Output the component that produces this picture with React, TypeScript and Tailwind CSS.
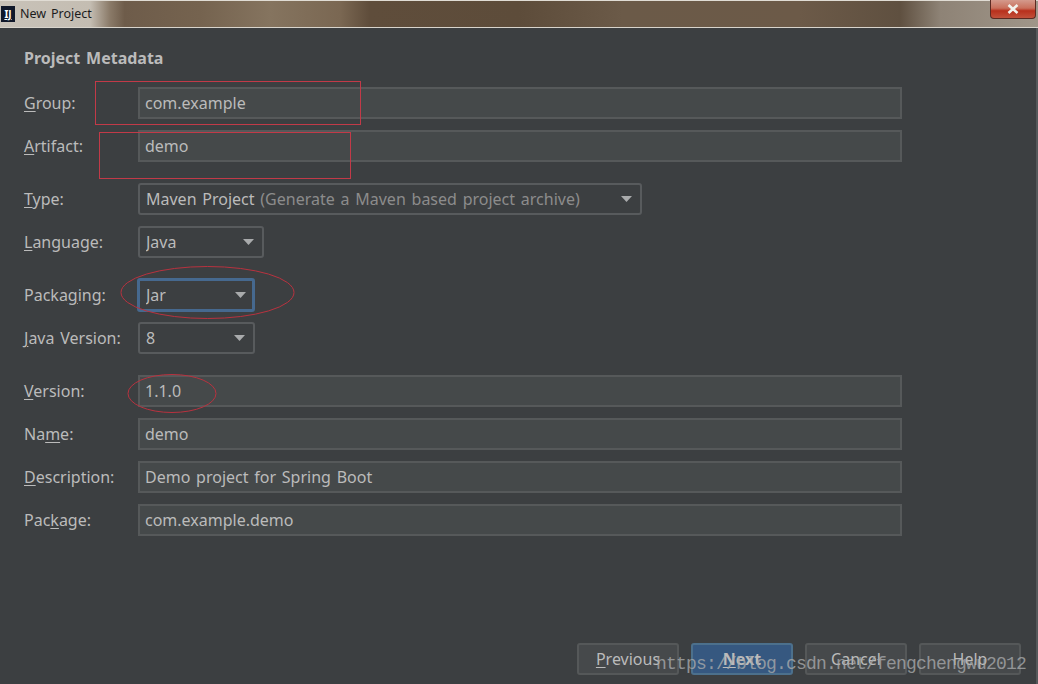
import React from "react";

const underline = "underline underline-offset-2 decoration-1";

function Label({ pre = "", u, post }: { pre?: string; u: string; post: string }) {
  return (
    <label className="w-[114px] shrink-0 text-[16px] text-[#bbbbbb]">
      {pre}
      <span className={underline}>{u}</span>
      {post}
    </label>
  );
}

function Field({ value }: { value: string }) {
  return (
    <div className="flex h-[32px] w-[764px] items-center border-2 border-[#56595a] bg-[#45494a] pl-[5px] text-[16px] text-[#bbbbbb]">
      {value}
    </div>
  );
}

function Select({ width, focused, children }: { width: string; focused?: boolean; children: React.ReactNode }) {
  return (
    <div
      className={
        focused
          ? `flex h-[34px] -ml-px items-center justify-between rounded-[3px] border-[3px] border-[#46698f] bg-[#3c3f41] pl-[6px] pr-[6px] text-[16px] text-[#bbbbbb] ${width}`
          : `flex h-[32px] items-center justify-between rounded-[3px] border-2 border-[#585b5d] bg-[#3c3f41] pl-[6px] pr-[8px] text-[16px] text-[#bbbbbb] ${width}`
      }
    >
      <span className="truncate">{children}</span>
      <svg width="11" height="6" viewBox="0 0 11 6" className="shrink-0">
        <path d="M0 0h11L5.5 6z" fill="#a9abac" />
      </svg>
    </div>
  );
}

function Button({ primary, children }: { primary?: boolean; children: React.ReactNode }) {
  return (
    <button
      className={
        primary
          ? "h-[32px] w-[102px] rounded-[3px] border-2 border-[#4c708c] bg-[#365880] text-[16px] font-bold text-[#bbbbbb]"
          : "h-[32px] w-[102px] rounded-[3px] border-2 border-[#555859] bg-[#46494b] text-[16px] text-[#bbbbbb]"
      }
    >
      {children}
    </button>
  );
}

export default function App() {
  return (
    <div
      className="relative flex h-[684px] w-[1038px] flex-col overflow-hidden bg-[#3c3f41] [word-spacing:1.6px]"
      style={{ fontFamily: '"Noto Sans", "Open Sans", sans-serif' }}
    >
      {/* Title bar */}
      <div className="relative flex h-[28px] shrink-0 items-center border-t border-b border-t-[#e0dcd4] border-b-[#d8d4cc] bg-[linear-gradient(90deg,#c8c2b8_0%,#c4bdb2_8.7%,#8a7a68_10.6%,#6e5c4a_12%,#75634f_19.3%,#85745f_26%,#7a6752_32.8%,#5f4d3b_35.6%,#5d4c3a_50%,#6b5a48_60%,#6c5a48_77%,#5f5040_86.7%,#8e8376_90.6%,#a09689_100%)]">
        <div className="ml-px flex h-[16px] w-[14px] items-center justify-center bg-[#10182a] text-[10px] font-bold leading-none text-white underline">
          IJ
        </div>
        <span className="ml-[5px] text-[12.5px] text-[#1c1c1c]">New Project</span>
        <div className="absolute right-[2px] top-[-1px] flex h-[19px] w-[46px] items-center justify-center rounded-b-[4px] border border-t-0 border-[#5c2a22] bg-[linear-gradient(180deg,#d49a8c_0%,#c9705c_45%,#b8301c_60%,#c2503a_100%)]">
          <svg width="12" height="10" viewBox="0 0 12 10">
            <path d="M1.5 1l9 8M10.5 1l-9 8" stroke="#f2f2ec" strokeWidth="2.6" />
          </svg>
        </div>
      </div>

      {/* Form */}
      <div className="flex flex-1 flex-col border-r-2 border-[#55585a] pl-[24px]">
        <h2 className="mt-[18px] h-[24px] text-[16px] font-bold leading-[24px] text-[#bbbbbb]">Project Metadata</h2>

        <div className="mt-[17px] flex flex-col gap-[11px]">
          <div className="flex items-center"><Label u="G" post="roup:" /><Field value="com.example" /></div>
          <div className="flex items-center"><Label u="A" post="rtifact:" /><Field value="demo" /></div>
        </div>

        <div className="mt-[21px] flex flex-col gap-[11px]">
          <div className="flex items-center">
            <Label u="T" post="ype:" />
            <Select width="w-[504px]">
              Maven Project <span className="text-[#8c8c8c]">(Generate a Maven based project archive)</span>
            </Select>
          </div>
          <div className="flex items-center"><Label u="L" post="anguage:" /><Select width="w-[126px]">Java</Select></div>
        </div>

        <div className="mt-[20px] flex h-[34px] items-center">
          <Label pre="Packa" u="g" post="ing:" />
          <Select width="w-[118px]" focused>Jar</Select>
        </div>

        <div className="mt-[10px] flex items-center">
          <Label u="J" post="ava Version:" />
          <Select width="w-[117px]">8</Select>
        </div>

        <div className="mt-[21px] flex flex-col gap-[11px]">
          <div className="flex items-center"><Label u="V" post="ersion:" /><Field value="1.1.0" /></div>
          <div className="flex items-center"><Label pre="Na" u="m" post="e:" /><Field value="demo" /></div>
          <div className="flex items-center"><Label u="D" post="escription:" /><Field value="Demo project for Spring Boot" /></div>
          <div className="flex items-center"><Label pre="Pac" u="k" post="age:" /><Field value="com.example.demo" /></div>
        </div>

        {/* Footer buttons */}
        <div className="mt-auto mb-[9px] flex justify-end gap-[12px] pr-[15px]">
          <Button><span className={underline}>P</span>revious</Button>
          <Button primary><span className={underline}>N</span>ext</Button>
          <Button>Cancel</Button>
          <Button>Help</Button>
        </div>
      </div>

      {/* Hand-drawn annotations over the screenshot */}
      <div className="absolute left-[95px] top-[81px] h-[44px] w-[266px] border border-[#c23a48]" />
      <div className="absolute left-[99px] top-[132px] h-[47px] w-[252px] border border-[#c23a48]" />
      <svg className="absolute left-0 top-0" width="1038" height="684" fill="none">
        <ellipse cx="207.5" cy="292.5" rx="86.5" ry="26" stroke="#b8323f" strokeWidth="1" />
        <ellipse cx="172" cy="393.5" rx="44" ry="19" stroke="#b8323f" strokeWidth="1" />
      </svg>

      {/* Blog watermark */}
      <div
        className="absolute left-[656px] top-[652px] whitespace-nowrap text-[18px] leading-[24px] tracking-[-0.8px] text-[#a8aaab]/80"
        style={{ fontFamily: '"Liberation Mono", monospace' }}
      >
        https://blog.csdn.net/fengchengwu2012
      </div>
    </div>
  );
}
